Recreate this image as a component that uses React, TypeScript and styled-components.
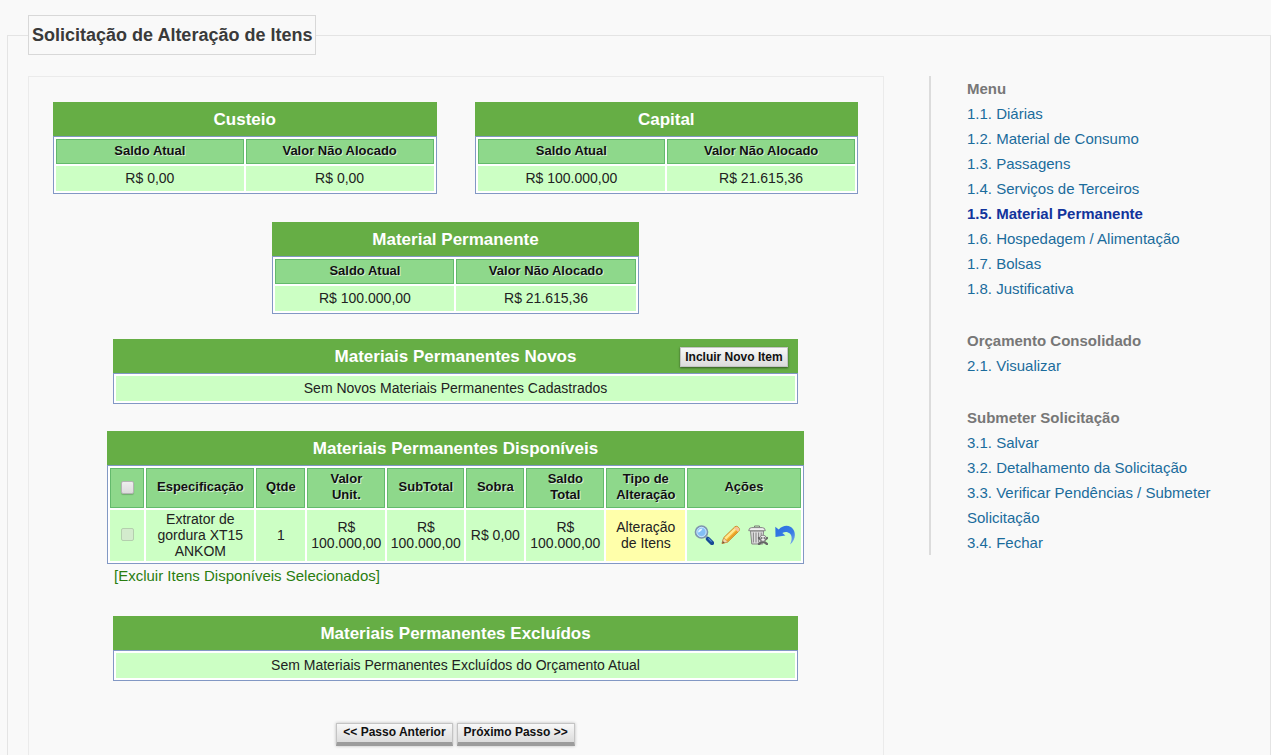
import React from "react";
import styled, { createGlobalStyle, css } from "styled-components";

const GlobalStyle = createGlobalStyle`
  * { box-sizing: border-box; }
  body {
    margin: 0;
    background: #f9f9f9;
    font-family: "Liberation Sans", Arial, sans-serif;
    font-size: 14px;
    color: #222;
  }
`;

const Page = styled.main`
  padding: 15px 0 30px 7px;
`;

const Frame = styled.fieldset`
  display: block;
  margin: 0;
  min-width: 0;
  padding: 21px 0 20px 20px;
  border: 1px solid #e4e4e4;
`;

const FrameTitle = styled.legend`
  padding: 0 3px;
  border: 1px solid #d8d8d8;
  color: #3a3a3a;
  font-size: 18px;
  font-weight: bold;
  line-height: 38px;
`;

const Columns = styled.div`
  display: flex;
  align-items: flex-start;
  gap: 45px;
`;

const Panel = styled.section`
  flex: 1;
  min-width: 0;
  display: flex;
  flex-direction: column;
  align-items: center;
  padding: 25px 25px 40px 24px;
  border: 1px solid #ebebeb;
`;

const BalanceRow = styled.div`
  display: flex;
  gap: 38px;
  width: 100%;
  margin-bottom: 28px;
`;

const Block = styled.div<{ $width?: string; $gap?: number }>`
  width: ${(p) => p.$width ?? "100%"};
  margin-bottom: ${(p) => p.$gap ?? 0}px;
`;

const DataTable = styled.table`
  width: 100%;
  table-layout: fixed;
  border: 1px solid #8298c4;
  border-collapse: separate;
  border-spacing: 2px;
  background: #fff;
`;

const Caption = styled.caption`
  padding-top: 2px;
  background: #66ae45;
  color: #fff;
  font-size: 17px;
  font-weight: bold;
  line-height: 32px;
`;

const CaptionBar = styled.div`
  display: grid;
  grid-template-columns: 1fr auto 1fr;
  align-items: center;
  padding: 0 10px;
`;

const HeadCell = styled.th<{ $tall?: boolean }>`
  height: ${(p) => (p.$tall ? 40 : 25)}px;
  padding: 0 8px 2px;
  border: 1px solid #63ba6c;
  background: #8ed88b;
  color: #111;
  font-size: 13px;
  line-height: 16px;
  text-shadow: 1px 1px 0 #d5efd3;
`;

const Cell = styled.td<{ $changed?: boolean; $tall?: boolean }>`
  height: ${(p) => (p.$tall ? 51 : 25)}px;
  padding: 0 2px 2px;
  background: ${(p) => (p.$changed ? "#ffffaa" : "#ccffc4")};
  line-height: 16px;
  text-align: center;
`;

const Column = styled.col<{ $width?: number }>`
  ${(p) => p.$width && css`width: ${p.$width}px;`}
`;

const Check = styled.input`
  appearance: none;
  display: block;
  width: 13px;
  height: 13px;
  margin: 0 auto;
  border: 1px solid #b3b3b3;
  border-radius: 2px;
  background: linear-gradient(#eee, #dcdcdc);
  box-shadow: 0 1px 1px rgba(0, 0, 0, 0.2);
  &:disabled {
    border-color: #b4cfae;
    background: #d3ebcd;
    box-shadow: none;
  }
`;

const Button = styled.button`
  height: 20px;
  padding: 0 4px;
  border: 1px solid #c4c4c4;
  background: linear-gradient(#f8f8f8, #dcdcdc);
  box-shadow: 0 1px 2px rgba(0, 0, 0, 0.5);
  color: #111;
  font: bold 12px/18px "Liberation Sans", Arial, sans-serif;
  white-space: nowrap;
`;

const AddButton = styled(Button)`
  justify-self: end;
`;

const StepButton = styled(Button)`
  height: 23px;
  padding: 0 6px 2px;
  border-bottom: 4px solid #9c9c9c;
  box-shadow: 0 0 3px rgba(0, 0, 0, 0.25);
  line-height: 16px;
`;

const Steps = styled.div`
  display: flex;
  justify-content: center;
  gap: 4px;
`;

const Actions = styled.div`
  display: flex;
  justify-content: center;
  gap: 7px;
`;

const IconButton = styled.button`
  display: block;
  width: 20px;
  height: 20px;
  padding: 0;
  border: 0;
  background: none;
  svg { display: block; }
`;

const DeleteLink = styled.a`
  align-self: flex-start;
  margin: 2px 0 30px 61px;
  color: #2a7d0f;
  font-size: 15px;
  line-height: 20px;
  text-decoration: none;
`;

const Menu = styled.nav`
  flex: 0 0 341px;
  display: flex;
  flex-direction: column;
  gap: 27px;
  padding: 0 20px 0 36px;
  border-left: 2px solid #dcdcdc;
  font-size: 15px;
  line-height: 25px;
`;

const MenuTitle = styled.h2`
  margin: 0;
  color: #777;
  font-size: 15px;
  line-height: 25px;
`;

const MenuList = styled.ul`
  margin: 0;
  padding: 0;
  list-style: none;
`;

const MenuLink = styled.a<{ $active?: boolean }>`
  color: ${(p) => (p.$active ? "#12349c" : "#1b6c9c")};
  font-weight: ${(p) => (p.$active ? "bold" : "normal")};
  text-decoration: none;
`;

const menu = [
  {
    title: "Menu",
    items: [
      "1.1. Diárias",
      "1.2. Material de Consumo",
      "1.3. Passagens",
      "1.4. Serviços de Terceiros",
      "1.5. Material Permanente",
      "1.6. Hospedagem / Alimentação",
      "1.7. Bolsas",
      "1.8. Justificativa",
    ],
  },
  { title: "Orçamento Consolidado", items: ["2.1. Visualizar"] },
  {
    title: "Submeter Solicitação",
    items: [
      "3.1. Salvar",
      "3.2. Detalhamento da Solicitação",
      "3.3. Verificar Pendências / Submeter Solicitação",
      "3.4. Fechar",
    ],
  },
];
const activeItem = "1.5. Material Permanente";

const columnWidths = [34, 108, 49, 78, 77, 58, 78, 79];

function Balance({ title, current, free }: { title: string; current: string; free: string }) {
  return (
    <DataTable>
      <Caption>{title}</Caption>
      <thead>
        <tr>
          <HeadCell scope="col">Saldo Atual</HeadCell>
          <HeadCell scope="col">Valor Não Alocado</HeadCell>
        </tr>
      </thead>
      <tbody>
        <tr>
          <Cell>{current}</Cell>
          <Cell>{free}</Cell>
        </tr>
      </tbody>
    </DataTable>
  );
}

function EmptyTable({ title, message, action }: { title: string; message: string; action?: string }) {
  return (
    <DataTable>
      <Caption>
        {action ? (
          <CaptionBar>
            <span />
            <span>{title}</span>
            <AddButton type="button">{action}</AddButton>
          </CaptionBar>
        ) : (
          title
        )}
      </Caption>
      <tbody>
        <tr>
          <Cell>{message}</Cell>
        </tr>
      </tbody>
    </DataTable>
  );
}

const ViewIcon = () => (
  <svg width="20" height="20" viewBox="0 0 20 20" aria-hidden="true">
    <path d="M12 11.5 18 17.5" stroke="#8fa9c4" strokeWidth="2.5" />
    <path d="M14 14 18 18" stroke="#174b96" strokeWidth="4.4" strokeLinecap="round" />
    <path d="M14.4 13.4 17.6 16.6" stroke="#4f90d8" strokeWidth="1.2" />
    <circle cx="7.5" cy="7" r="6" fill="#8fc8f7" stroke="#8095ad" strokeWidth="1.7" />
    <circle cx="7.5" cy="7" r="4.6" fill="#83bff5" stroke="#e3f4ff" strokeWidth="0.7" />
    <path d="M4 7.5C4 4.7 6 3.4 8.5 3.4c-.8 2-2.2 3.4-4.5 4.1z" fill="#e4f5ff" />
  </svg>
);

const EditIcon = () => (
  <svg width="20" height="20" viewBox="0 0 20 20" aria-hidden="true">
    <path d="M1 18.5 2.7 12.7 13.8 1.9q1.6-1.3 3.3.2l.8.9q1.3 1.5-.1 3.1L6.700 17z" fill="#f8bd3b" stroke="#c98525" strokeWidth="1" strokeLinejoin="round" />
    <path d="M4.2 13.6 14.7 3.5" stroke="#ffe991" strokeWidth="2.4" />
    <path d="M6.3 15.8 16.5 5.8" stroke="#e79b26" strokeWidth="1.2" />
    <path d="M13 3l4 4 1-1.300q1-1.2-.1-2.5l-1-1q-1.3-1-2.6 0z" fill="#f5c49a" />
    <path d="m2.7 12.9 4 4L1.2 18.3z" fill="#f4d7ae" stroke="#c09059" strokeWidth="0.6" />
    <path d="m1.8 16 2 1.7-2.7.8z" fill="#77543a" />
  </svg>
);

const TrashIcon = () => (
  <svg width="20" height="20" viewBox="0 0 20 20" aria-hidden="true">
    <path d="M2.500 6h13l-.7 13h-11z" fill="#dedede" stroke="#858585" />
    <path d="M5.4 7.5v10M8 7.5v10M10.6 7.5v10M13.2 7.5v4" stroke="#8b8b8b" strokeWidth="1.1" />
    <path d="M6.5 2.5V1h5v1.5" fill="none" stroke="#777" />
    <path d="M.7 5.7q.2-3.1 3-3.1h10.6q2.8 0 3 3.1z" fill="#efefef" stroke="#858585" />
    <path d="m11 13 8 6M19 13l-8 6" stroke="#666" strokeWidth="2.2" strokeLinecap="round" />
    <path d="M12 12.6q0-2.4 3-2.4t3 2.4q0 1.700-1.2 2.100v1.500h-3.600v-1.500q-1.200-.4-1.200-2.100z" fill="#eee" stroke="#777" strokeWidth="0.8" />
    <path d="M13 12.200h1.400v1.500H13zM15.600 12.200H17v1.500h-1.400z" fill="#555" />
  </svg>
);

const UndoIcon = () => (
  <svg width="20" height="20" viewBox="0 0 20 20" aria-hidden="true">
    <defs>
      <linearGradient id="undoFill" x1="0" y1="0" x2="1" y2="1">
        <stop offset="0" stopColor="#2c6fe0" />
        <stop offset="0.6" stopColor="#397ce5" />
        <stop offset="1" stopColor="#86b1ed" />
      </linearGradient>
    </defs>
    <path d="M.3 1.8 3.7 4.5C8.500-.5 15.2-.2 18.3 4.5c2.9 4.5 1.7 11-3.2 14.9 2-4 2.200-8.500-.2-10.8C12.800 6.600 9.800 6.500 7.300 8l3.100 2.500L.5 11.9z" fill="url(#undoFill)" />
  </svg>
);

const actions = [
  { label: "Visualizar", icon: <ViewIcon /> },
  { label: "Editar", icon: <EditIcon /> },
  { label: "Excluir", icon: <TrashIcon /> },
  { label: "Desfazer", icon: <UndoIcon /> },
];

const headings = ["Especificação", "Qtde", "Valor Unit.", "SubTotal", "Sobra", "Saldo Total", "Tipo de Alteração", "Ações"];
const values = ["Extrator de gordura XT15 ANKOM", "1", "R$ 100.000,00", "R$ 100.000,00", "R$ 0,00", "R$ 100.000,00"];

function AvailableTable() {
  return (
    <DataTable>
      <Caption>Materiais Permanentes Disponíveis</Caption>
      <colgroup>
        {columnWidths.map((w, i) => (
          <Column key={i} $width={w} />
        ))}
        <Column />
      </colgroup>
      <thead>
        <tr>
          <HeadCell $tall scope="col">
            <Check type="checkbox" aria-label="Selecionar todos" />
          </HeadCell>
          {headings.map((h) => (
            <HeadCell $tall scope="col" key={h}>{h}</HeadCell>
          ))}
        </tr>
      </thead>
      <tbody>
        <tr>
          <Cell $tall>
            <Check type="checkbox" disabled aria-label="Selecionar item" />
          </Cell>
          {values.map((v, i) => (
            <Cell $tall key={i}>{v}</Cell>
          ))}
          <Cell $tall $changed>Alteração de Itens</Cell>
          <Cell $tall>
            <Actions>
              {actions.map((a) => (
                <IconButton type="button" key={a.label} aria-label={a.label}>{a.icon}</IconButton>
              ))}
            </Actions>
          </Cell>
        </tr>
      </tbody>
    </DataTable>
  );
}

export default function App() {
  return (
    <>
      <GlobalStyle />
      <Page>
        <Frame>
          <FrameTitle>Solicitação de Alteração de Itens</FrameTitle>
          <Columns>
            <Panel>
              <BalanceRow>
                <Balance title="Custeio" current="R$ 0,00" free="R$ 0,00" />
                <Balance title="Capital" current="R$ 100.000,00" free="R$ 21.615,36" />
              </BalanceRow>
              <Block $width="45.5%" $gap={25}>
                <Balance title="Material Permanente" current="R$ 100.000,00" free="R$ 21.615,36" />
              </Block>
              <Block $width="85%" $gap={27}>
                <EmptyTable
                  title="Materiais Permanentes Novos"
                  message="Sem Novos Materiais Permanentes Cadastrados"
                  action="Incluir Novo Item"
                />
              </Block>
              <Block $width="86.5%">
                <AvailableTable />
              </Block>
              <DeleteLink href="#excluir">[Excluir Itens Disponíveis Selecionados]</DeleteLink>
              <Block $width="85%" $gap={42}>
                <EmptyTable
                  title="Materiais Permanentes Excluídos"
                  message="Sem Materiais Permanentes Excluídos do Orçamento Atual"
                />
              </Block>
              <Steps>
                <StepButton type="button">&lt;&lt; Passo Anterior</StepButton>
                <StepButton type="button">Próximo Passo &gt;&gt;</StepButton>
              </Steps>
            </Panel>
            <Menu aria-label="Etapas">
              {menu.map((group) => (
                <section key={group.title}>
                  <MenuTitle>{group.title}</MenuTitle>
                  <MenuList>
                    {group.items.map((item) => (
                      <li key={item}>
                        <MenuLink href="#etapa" $active={item === activeItem}>{item}</MenuLink>
                      </li>
                    ))}
                  </MenuList>
                </section>
              ))}
            </Menu>
          </Columns>
        </Frame>
      </Page>
    </>
  );
}
